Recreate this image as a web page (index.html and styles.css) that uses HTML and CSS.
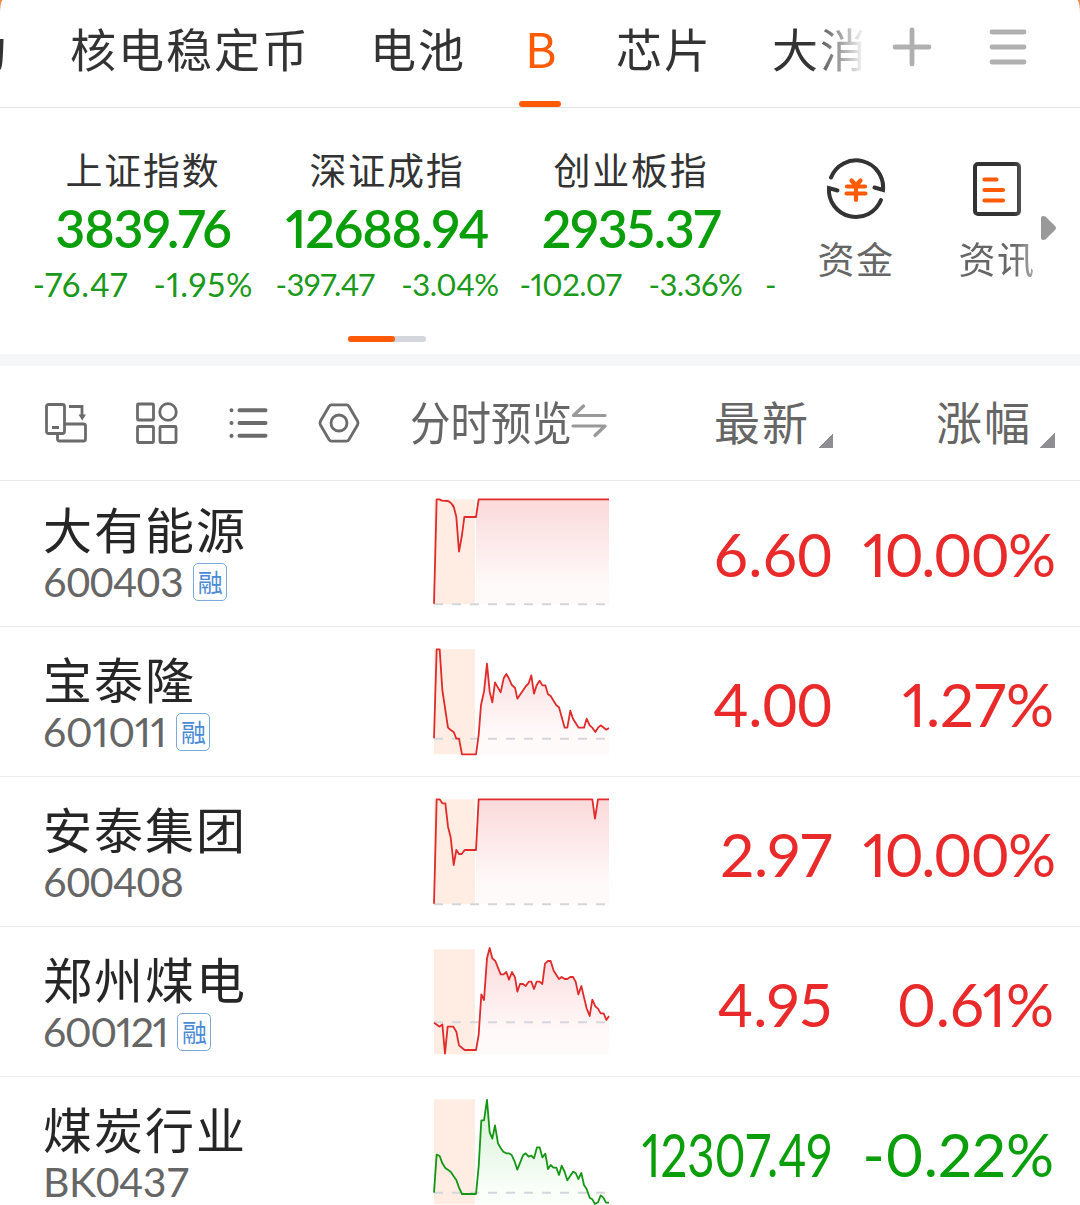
FILE: index.html
```html
<!DOCTYPE html>
<html lang="zh-CN">
<head>
    <meta charset="UTF-8">
    <meta name="viewport" content="width=device-width, initial-scale=1.0">
    <title>自选</title>
    <link rel="stylesheet" href="styles.css">
</head>
<body>
<div class="page">
    <header class="topbar">
        <nav class="tabs">
            <span class="tab">动</span>
            <span class="tab">核电稳定币</span>
            <span class="tab">电池</span>
            <span class="tab active">B</span>
            <span class="tab">芯片</span>
            <span class="tab">大消</span>
        </nav>
        <div class="top-actions">
            <svg width="40" height="40" viewBox="0 0 40 40"><path d="M3 20H37M20 3V37"/></svg>
            <svg width="40" height="40" viewBox="0 0 40 40"><path d="M4 5H36M4 20H36M4 35H36"/></svg>
        </div>
    </header>

    <section class="market">
        <div class="indices">
            <div class="index">
                <div class="index-name">上证指数</div>
                <div class="index-value">3839.76</div>
                <div class="index-change big"><span>-76.47</span><span>-1.95%</span></div>
            </div>
            <div class="index">
                <div class="index-name">深证成指</div>
                <div class="index-value">12688.94</div>
                <div class="index-change"><span>-397.47</span><span>-3.04%</span></div>
            </div>
            <div class="index">
                <div class="index-name">创业板指</div>
                <div class="index-value">2935.37</div>
                <div class="index-change"><span>-102.07</span><span>-3.36%</span></div>
            </div>
            <div class="index next">
                <div class="index-change">-</div>
            </div>
        </div>
        <div class="shortcuts">
            <div class="shortcut">
                <svg width="64" height="64" viewBox="0 0 64 64">
                    <g fill="none" stroke="#333" stroke-width="4" stroke-linecap="round">
                        <path d="M7 20.5A27 27 0 0 1 59 33L50.500 30.500"/>
                        <path d="M57 43A27 27 0 0 1 5 31L13.500 33.500"/>
                    </g>
                    <path d="M27.500 23.500L32 28.500L36.500 23.500M23 29.500H41M22.500 36.500H41.500M32 29V43" fill="none" stroke="#ff5a05" stroke-width="4.200" stroke-linecap="round"/>
                </svg>
                <span>资金</span>
            </div>
            <div class="shortcut fade">
                <svg width="64" height="64" viewBox="0 0 64 64">
                    <rect x="10" y="7" width="44" height="50" rx="3" fill="none" stroke="#333" stroke-width="4"/>
                    <path d="M19.500 22.500H31.500M19.500 33H38M19.500 43.500H38" stroke="#ff5a05" stroke-width="4.200" stroke-linecap="round"/>
                </svg>
                <span>资讯</span>
            </div>
        </div>
        <svg class="more" width="15" height="24" viewBox="0 0 15 24"><path d="M0 2Q0 0 2 0Q4 0 5 1L14 10Q16 12 14 14L5 23Q4 24 2 24Q0 24 0 22Z" fill="#999"/></svg>
        <div class="pager"><i></i></div>
    </section>

    <div class="toolbar">
        <div class="tools">
            <svg width="48" height="48" viewBox="0 0 48 48">
                <rect x="4.500" y="5.500" width="18" height="29" rx="2"/>
                <path d="M10 28.500H17M15.500 35V40Q15.500 42 17.500 42H41.500Q43.500 42 43.500 40V27Q43.500 25 41.500 25H23M27 7.500H40V18"/>
                <path d="M36.500 15.500H44L40.200 21.500Z" class="solid"/>
            </svg>
            <svg width="48" height="48" viewBox="0 0 48 48">
                <rect x="4.500" y="5" width="16" height="16" rx="1"/>
                <circle cx="35" cy="13" r="8.300"/>
                <rect x="4.500" y="27.500" width="16" height="16" rx="1"/>
                <rect x="27" y="27.500" width="16" height="16" rx="1"/>
            </svg>
            <svg width="48" height="48" viewBox="0 0 48 48">
                <path class="bold" d="M7.500 11.200V11.300M7.500 24V24.100M7.500 36.800V36.900M15.500 11.200H41.500M15.500 24H41.500M15.500 36.800H41.500"/>
            </svg>
            <svg width="48" height="48" viewBox="0 0 48 48">
                <path d="M16.500 5.800H31.500Q33 5.800 34 7.500L42.500 22Q43.500 24 42.500 26L34 40.500Q33 42.200 31.500 42.200H16.500Q15 42.200 14 40.500L5.500 26Q4.500 24 5.500 22L14 7.500Q15 5.800 16.500 5.800Z"/>
                <circle cx="24" cy="24" r="8"/>
            </svg>
        </div>
        <div class="preview">
            <span>分时预览</span>
            <svg width="36" height="36" viewBox="0 0 36 36"><path d="M34 11.500H2.500L12.500 2M2 22H34L24 31.500"/></svg>
        </div>
        <div class="sort">最新</div>
        <div class="sort">涨幅</div>
    </div>

    <svg class="defs" width="0" height="0">
        <defs>
            <linearGradient id="redFill" gradientUnits="userSpaceOnUse" x1="0" y1="43" x2="0" y2="300">
                <stop offset="0" stop-color="#fbd9da"/>
                <stop offset="1" stop-color="#fffafa"/>
            </linearGradient>
            <linearGradient id="greenFill" gradientUnits="userSpaceOnUse" x1="0" y1="43" x2="0" y2="320">
                <stop offset="0" stop-color="#d5f0d5"/>
                <stop offset="1" stop-color="#fafffa"/>
            </linearGradient>
        </defs>
    </svg>

    <main class="list">
        <div class="row">
            <div class="stock">
                <div class="name">大有能源</div>
                <div class="code"><span>600403</span><b class="badge">融</b></div>
            </div>
            <svg class="chart up" viewBox="0 0 600 390">
                <path class="pre" d="M42 43H165V358H42Z"/>
                <path fill="url(#redFill)" d="M168 96L176 43H567V358H168Z"/>
                <path class="base" d="M42 358H567"/>
                <path class="line" d="M42 356L50 43H58L66 47L84 48Q97 54 102 68L109 96L117 200L126 150L133 96H168L176 43H567"/>
            </svg>
            <div class="price red">6.60</div>
            <div class="pct red ones tight">10.00%</div>
        </div>
        <div class="row">
            <div class="stock">
                <div class="name">宝泰隆</div>
                <div class="code"><span class="ones">601011</span><b class="badge">融</b></div>
            </div>
            <svg class="chart up" viewBox="0 0 600 390">
                <path class="pre" d="M42 43H165V358H42Z"/>
                <path fill="url(#redFill)" d="M168 358L176 300L183 210L192 170L201 86L209 170L217 202L225 142L242 172L251 130L259 117L267 131L276 151L285 158L292 191L318 153L326 145L334 121L342 176L350 151L359 137L367 151H376L384 178L392 183L409 211L417 217L434 278H442L451 227L459 251L476 278H492L500 251L509 271L526 291L534 278L542 271L559 284L567 279V358Z"/>
                <path class="base" d="M42 311H567"/>
                <path class="line" d="M42 310L50 43H59L67 165L84 278L92 285L101 291L109 311H117L126 358H168L176 300L183 210L192 170L201 86L209 170L217 202L225 142L242 172L251 130L259 117L267 131L276 151L285 158L292 191L318 153L326 145L334 121L342 176L350 151L359 137L367 151H376L384 178L392 183L409 211L417 217L434 278H442L451 227L459 251L476 278H492L500 251L509 271L517 278L526 291L534 278L542 271L559 284L567 279"/>
            </svg>
            <div class="price red">4.00</div>
            <div class="pct red ones">1.27%</div>
        </div>
        <div class="row">
            <div class="stock">
                <div class="name">安泰集团</div>
                <div class="code"><span>600408</span></div>
            </div>
            <svg class="chart up" viewBox="0 0 600 390">
                <path class="pre" d="M42 43H165V358H42Z"/>
                <path fill="url(#redFill)" d="M168 195L176 43H517L525 101L534 43H567V358H168Z"/>
                <path class="base" d="M42 358H567"/>
                <path class="line" d="M42 356L50 43H59L67 55H76L84 125L92 157L101 240L109 195L117 207H125L134 195H168L176 43H517L525 101L534 43H567"/>
            </svg>
            <div class="price red ones">2.97</div>
            <div class="pct red ones tight">10.00%</div>
        </div>
        <div class="row">
            <div class="stock">
                <div class="name">郑州煤电</div>
                <div class="code"><span class="ones tight">600121</span><b class="badge">融</b></div>
            </div>
            <svg class="chart up" viewBox="0 0 600 390">
                <path class="pre" d="M42 43H165V358H42Z"/>
                <path fill="url(#redFill)" d="M168 345L176 300L184 178L192 195L201 70L209 39L217 70L226 78L242 118H251L259 111L267 134L276 111L285 127L292 170L300 147H309L317 153L326 140H334L342 162L350 140H359L367 147L375 86L384 78H392L401 107L417 132L425 126L434 132H442L451 126H459L467 140L475 178L484 153L492 187L500 220L509 243L517 194L526 214L534 221L542 235H551L559 255L567 243V358H168Z"/>
                <path class="base" d="M42 262H567"/>
                <path class="line" d="M42 263L59 275L67 268L75 356L83 275H100L109 290L117 331L134 345H168L176 300L184 178L192 195L201 70L209 39L217 70L226 78L242 118H251L259 111L267 134L276 111L285 127L292 170L300 147H309L317 153L326 140H334L342 162L350 140H359L367 147L375 86L384 78H392L401 107L417 132L425 126L434 132H442L451 126H459L467 140L475 178L484 153L492 187L500 220L509 243L517 194L526 214L534 221L542 235H551L559 255L567 243"/>
            </svg>
            <div class="price red ones">4.95</div>
            <div class="pct red ones">0.61%</div>
        </div>
        <div class="row">
            <div class="stock">
                <div class="name">煤炭行业</div>
                <div class="code"><span>BK0437</span></div>
            </div>
            <svg class="chart down" viewBox="0 0 600 390">
                <path class="pre" d="M42 43H165V358H42Z"/>
                <path fill="url(#greenFill)" d="M168 327L176 245L184 106H192L201 45L209 142L217 161L225 121L234 175L250 200L259 205H267L275 210L292 254L309 211L317 205L326 215L334 212L342 220L351 187H359L367 217L376 206L384 252L392 240L400 248H409L417 270L425 242L442 286L459 260L467 264L475 282L484 264L492 300L500 312L509 338L517 343L525 357H168Z"/>
                <path class="base" d="M42 323H567"/>
                <path class="line" d="M42 323L50 209L59 213L67 235L76 249L92 260L101 274L109 285L117 308L126 327H168L176 245L184 106H192L201 45L209 142L217 161L225 121L234 175L242 189L250 200L259 205H267L275 210L284 230L292 254L309 211L317 205L326 215L334 212L342 220L351 187H359L367 217L376 206L384 252L392 240L400 248H409L417 270L425 242L434 261L442 286L459 260L467 264L475 282L484 264L492 300L500 312L509 338L517 343L525 357L534 352L542 331L550 338L558 353H567"/>
            </svg>
            <div class="price green ones long"><span>12307.49</span></div>
            <div class="pct green ones">-0.22%</div>
        </div>
    </main>
</div>
</body>
</html>
```
FILE: styles.css
```css
* {
    box-sizing: border-box;
}
body {
    margin: 0;
    background-color: #f08a45;
    font-family: "Noto Sans CJK SC", sans-serif;
    color: #333;
}
.page {
    width: 1080px;
    height: 1205px;
    overflow: hidden;
    background-color: #fff;
    border-radius: 3px 3px 0 0 / 14px 14px 0 0;
}
.topbar {
    display: flex;
    height: 108px;
    border-bottom: 1px solid #e5e5e5;
}
.tabs {
    display: flex;
    gap: 60px;
    width: 868px;
    height: 107px;
    margin-right: 24px;
    overflow: hidden;
    -webkit-mask-image: linear-gradient(to right, #000 810px, transparent 866px);
    mask-image: linear-gradient(to right, #000 810px, transparent 866px);
}
.tab {
    flex: none;
    height: 107px;
    font-size: 46px;
    letter-spacing: 2px;
    line-height: 95px;
}
.tab:first-child {
    margin-left: -40px;
    margin-right: 2px;
}
.tab.active {
    width: 30px;
    font-size: 48px;
    letter-spacing: 0;
    text-indent: -1px;
    color: #ff5a05;
}
.tab.active::after {
    content: "";
    display: block;
    width: 42px;
    height: 6px;
    margin: 6px 0 0 -7px;
    border-radius: 3px;
    background-color: #ff5a05;
}
.top-actions {
    display: flex;
    gap: 56px;
    padding-top: 27px;
}
.top-actions path {
    stroke: #b0b0b0;
    stroke-width: 4.8;
    stroke-linecap: round;
}
.market {
    position: relative;
    display: flex;
    height: 258px;
    border-bottom: 12px solid #f6f7f9;
}
.indices {
    display: flex;
    flex: none;
    width: 776px;
    padding: 37px 0 0 21px;
    overflow: hidden;
}
.index {
    flex: none;
    width: 244px;
    text-align: center;
}
.index-name {
    font-size: 37px;
    letter-spacing: 1.7px;
    line-height: 48px;
}
.index-value {
    height: 68px;
    font-family: Lato, sans-serif;
    font-feature-settings: "pnum";
    font-weight: 600;
    font-size: 52px;
    line-height: 70px;
    letter-spacing: -1.2px;
    color: #0a9e0a;
}
.index-change {
    display: flex;
    justify-content: center;
    gap: 27px;
    font-family: Lato, sans-serif;
    font-feature-settings: "pnum";
    font-size: 31px;
    line-height: 46px;
    letter-spacing: -0.5px;
    color: #1a991a;
}
.index-change.big {
    gap: 25px;
    font-size: 33px;
    letter-spacing: 0.8px;
}
.index.next {
    padding-top: 116px;
}
.index.next .index-change {
    justify-content: flex-start;
    padding-left: 12px;
}
.shortcuts {
    display: flex;
    flex: none;
    gap: 41px;
    padding: 49px 0 0 30px;
}
.shortcut {
    display: flex;
    flex-direction: column;
    align-items: center;
    width: 100px;
    height: 140px;
    color: #666;
}
.shortcut span {
    margin-top: 12px;
    font-size: 37px;
    letter-spacing: 1.5px;
    line-height: 50px;
}
.shortcut.fade {
    -webkit-mask-image: linear-gradient(to right, #000 66px, transparent 115px);
    mask-image: linear-gradient(to right, #000 66px, transparent 115px);
}
.more {
    position: absolute;
    left: 1041px;
    top: 108px;
}
.pager {
    position: absolute;
    left: 348px;
    top: 228px;
    width: 78px;
    height: 6px;
    border-radius: 3px;
    background-color: #d3d6db;
}
.pager i {
    display: block;
    width: 47px;
    height: 6px;
    border-radius: 3px;
    background-color: #ff5a05;
}
.toolbar {
    display: flex;
    height: 115px;
    padding-left: 42px;
    border-bottom: 1px solid #e9e9e9;
    color: #666;
}
.tools {
    display: flex;
    gap: 43px;
    padding-top: 33px;
}
.tools svg {
    fill: none;
    stroke: #6b6b6b;
    stroke-width: 2.8;
}
.tools .bold {
    stroke-width: 4;
    stroke-linecap: round;
}
.tools .solid {
    fill: #6b6b6b;
    stroke: none;
}
.preview {
    display: flex;
    width: 201px;
    margin-left: 47px;
}
.preview span {
    width: 161px;
    font-size: 46px;
    line-height: 109px;
    white-space: nowrap;
    transform: scaleX(0.88);
    transform-origin: left;
}
.preview svg {
    flex: none;
    margin-top: 38px;
    fill: none;
    stroke: #999;
    stroke-width: 3.2;
    stroke-linecap: round;
    stroke-linejoin: round;
}
.sort {
    display: flex;
    justify-content: flex-end;
    width: 222px;
    font-size: 46px;
    letter-spacing: 2px;
    line-height: 109px;
}
.sort::after {
    content: "";
    width: 15px;
    height: 15px;
    margin: 67px 0 0 8px;
    background: linear-gradient(135deg, transparent 50%, #8f8e94 50%);
}
.defs {
    display: block;
}
.list {
    margin-top: -4px;
}
.row {
    display: flex;
    height: 150px;
    padding-left: 43px;
    border-bottom: 1px solid #ececec;
}
.stock {
    width: 377px;
}
.name {
    margin-top: 18px;
    font-size: 49px;
    letter-spacing: 2px;
    line-height: 66px;
    color: #262626;
}
.code {
    display: flex;
    align-items: center;
    gap: 10px;
    height: 42px;
    font-family: Lato, sans-serif;
    font-size: 41px;
    line-height: 42px;
    letter-spacing: -0.4px;
    color: #666;
}
.badge {
    width: 34px;
    height: 38px;
    border: 1.5px solid #7aaade;
    border-radius: 5px;
    font-family: "Noto Sans CJK SC", sans-serif;
    font-weight: normal;
    font-size: 25px;
    line-height: 34px;
    letter-spacing: 0;
    text-align: center;
    color: #4a8bd6;
}
.chart {
    width: 200px;
    height: 130px;
    margin-top: 8px;
}
.pre {
    fill: #ffede4;
}
.base {
    stroke: #d5d6dc;
    stroke-width: 6;
    stroke-dasharray: 27 27;
}
.line {
    fill: none;
    stroke-width: 5.4;
    stroke-linejoin: round;
}
.up .line {
    stroke: #e12a2a;
}
.down .line {
    stroke: #149614;
}
.price,
.pct {
    font-family: Lato, sans-serif;
    font-size: 60px;
    line-height: 155px;
    text-align: right;
    white-space: nowrap;
}
.price {
    width: 212px;
}
.pct {
    width: 222px;
}
/* proportional figures, so the 1 stays narrow */
.ones {
    font-feature-settings: "pnum";
}
.code .tight {
    letter-spacing: -1.4px;
}
.pct.tight {
    letter-spacing: -2px;
}
.long span {
    display: inline-block;
    margin-left: -40px;
    transform: scaleX(0.79);
    transform-origin: right;
}
.red {
    color: #ea2a2a;
}
.green {
    color: #0a9e0a;
}
```
